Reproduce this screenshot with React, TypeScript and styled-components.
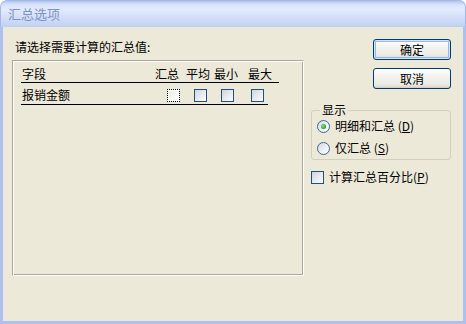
import React from 'react';
import styled, { createGlobalStyle } from 'styled-components';

const GlobalStyle = createGlobalStyle`
  html, body { margin: 0; padding: 0; background: #ffffff; }
  body {
    font-family: "Noto Sans CJK SC", "Noto Sans", sans-serif;
    font-size: 12px;
    color: #000;
  }
  * { box-sizing: border-box; }
`;

const Window = styled.div`
  width: 466px;
  height: 324px;
  display: flex;
  flex-direction: column;
`;

const TitleBar = styled.div`
  height: 27px;
  flex: none;
  display: flex;
  align-items: center;
  padding-left: 7px;
  border-radius: 7px 7px 0 0;
  border: 1px solid #a3b7e8;
  border-bottom: none;
  background: linear-gradient(
    to bottom,
    #b4c6ee 0px,
    #dbe5fb 4px,
    #e2eafc 9px,
    #d3dff8 16px,
    #c6d5f4 23px,
    #bfcff1 26px
  );
  color: #7d92c6;
  font-size: 13px;
  line-height: 16px;
`;

const Frame = styled.div`
  flex: 1;
  display: flex;
  background: #ece9d8;
  border: 3px solid #adc0ee;
  border-top: none;
`;

const LeftColumn = styled.div`
  width: 292px;
  margin-left: 9px;
  padding-top: 13px;
  display: flex;
  flex-direction: column;
`;

const Prompt = styled.div`
  height: 14px;
  line-height: 14px;
  margin-bottom: 6px;
  padding-left: 3px;
`;

const ListBox = styled.div`
  width: 292px;
  height: 216px;
  border: 1px solid;
  border-color: #aca899 #ffffff #ffffff #aca899;
  box-shadow: inset 1px 1px 0 #ffffff, inset -1px -1px 0 #aca899;
  padding: 4px 0 0 8px;
  display: flex;
  flex-direction: column;
`;

const HeaderRow = styled.div`
  width: 258px;
  height: 18px;
  display: flex;
  align-items: center;
  border-bottom: 1px solid #000;
  padding-left: 1px;
  line-height: 14px;
`;

const FieldName = styled.div<{ $width: number }>`
  flex: none;
  width: ${(p) => p.$width}px;
`;

const HeadCell = styled.div<{ $gap: number }>`
  flex: none;
  width: 24px;
  margin-left: ${(p) => p.$gap}px;
  white-space: nowrap;
`;

const DataRow = styled.div`
  width: 247px;
  height: 22px;
  display: flex;
  align-items: center;
  border-bottom: 1px solid #000;
  padding: 3px 0 0 1px;
  line-height: 14px;
`;

const Check = styled.span<{ $gap?: number; $focus?: boolean }>`
  flex: none;
  display: inline-block;
  width: 13px;
  height: 13px;
  margin-left: ${(p) => p.$gap ?? 0}px;
  border: 1px ${(p) => (p.$focus ? 'dotted #000' : 'solid #1c5180')};
  background: ${(p) =>
    p.$focus
      ? 'linear-gradient(135deg, #ecebe6 0%, #ffffff 100%)'
      : 'linear-gradient(135deg, #d2d4dc 0%, #e9ebf1 55%, #fbfbfc 100%)'};
  box-shadow: ${(p) => (p.$focus ? 'inset 0 0 0 1px #ffffff' : 'none')};
`;

const RightColumn = styled.div`
  width: 140px;
  margin-left: 7px;
  padding-top: 12px;
  display: flex;
  flex-direction: column;
`;

const Button = styled.button<{ $default?: boolean }>`
  align-self: flex-end;
  width: 78px;
  height: 21px;
  margin: 0 0 8px 0;
  padding: 0;
  font-family: inherit;
  font-size: 12px;
  line-height: 14px;
  color: #000;
  border: 1px solid #003c74;
  border-radius: 3px;
  background: linear-gradient(to bottom, #ffffff 0%, #f3f2ee 40%, #ecebe5 80%, #d8d3c6 100%);
  box-shadow: ${(p) =>
    p.$default
      ? 'inset 0 0 0 1px #cee7ff, inset 0 0 0 2px #98b8ea'
      : 'inset 0 -1px 0 #d6d0c5'};
`;

const GroupBox = styled.fieldset`
  margin: 6px 0 0 0;
  padding: 0 4px 2px 4px;
  width: 140px;
  border: 1px solid #d0d0bf;
  border-radius: 3px;
  min-width: 0;
`;

const Legend = styled.legend`
  margin-left: 4px;
  padding: 0 2px;
  line-height: 14px;
  height: 14px;
`;

const OptionRow = styled.label<{ $gap?: number }>`
  display: flex;
  align-items: center;
  height: 18px;
  margin-top: ${(p) => p.$gap ?? 0}px;
  padding-left: 1px;
  line-height: 14px;
  white-space: nowrap;
`;

const Radio = styled.span<{ $checked?: boolean }>`
  flex: none;
  position: relative;
  width: 13px;
  height: 13px;
  margin-right: 5px;
  border-radius: 50%;
  border: 1px solid #3c6794;
  background: linear-gradient(135deg, #d8d9df 0%, #eef0f4 55%, #ffffff 100%);
  &::after {
    content: '';
    display: ${(p) => (p.$checked ? 'block' : 'none')};
    position: absolute;
    left: 3px;
    top: 3px;
    width: 5px;
    height: 5px;
    border-radius: 50%;
    background: radial-gradient(circle at 40% 40%, #8ee08e 0%, #2fa62f 60%, #1f8a1f 100%);
  }
`;

const CheckRow = styled.label`
  display: flex;
  align-items: center;
  height: 14px;
  margin-top: 10px;
  line-height: 14px;
  white-space: nowrap;
  gap: 5px;
`;

const LabelText = styled.span`
  white-space: nowrap;
`;

const columns = [
  { label: '汇总', headX: 134, boxX: 146 },
  { label: '平均', headX: 165, boxX: 173 },
  { label: '最小', headX: 193, boxX: 200 },
  { label: '最大', headX: 227, boxX: 230 },
];

export default function App() {
  return (
    <>
      <GlobalStyle />
      <Window>
        <TitleBar>汇总选项</TitleBar>
        <Frame>
          <LeftColumn>
            <Prompt>请选择需要计算的汇总值:</Prompt>
            <ListBox>
              <HeaderRow>
                <FieldName $width={columns[0].headX - 1}>字段</FieldName>
                {columns.map((c, i) => (
                  <HeadCell key={c.label} $gap={i === 0 ? 0 : c.headX - (columns[i - 1].headX + 24)}>
                    {c.label}
                  </HeadCell>
                ))}
              </HeaderRow>
              <DataRow>
                <FieldName $width={columns[0].boxX - 1}>报销金额</FieldName>
                {columns.map((c, i) => (
                  <Check
                    key={c.label}
                    $focus={i === 0}
                    $gap={i === 0 ? 0 : c.boxX - (columns[i - 1].boxX + 13)}
                  />
                ))}
              </DataRow>
            </ListBox>
          </LeftColumn>
          <RightColumn>
            <Button $default>确定</Button>
            <Button>取消</Button>
            <GroupBox>
              <Legend>显示</Legend>
              <OptionRow>
                <Radio $checked />
                <LabelText>
                  明细和汇总 (<u>D</u>)
                </LabelText>
              </OptionRow>
              <OptionRow $gap={4}>
                <Radio />
                <LabelText>
                  仅汇总 (<u>S</u>)
                </LabelText>
              </OptionRow>
            </GroupBox>
            <CheckRow>
              <Check />
              <LabelText>
                计算汇总百分比(<u>P</u>)
              </LabelText>
            </CheckRow>
          </RightColumn>
        </Frame>
      </Window>
    </>
  );
}
